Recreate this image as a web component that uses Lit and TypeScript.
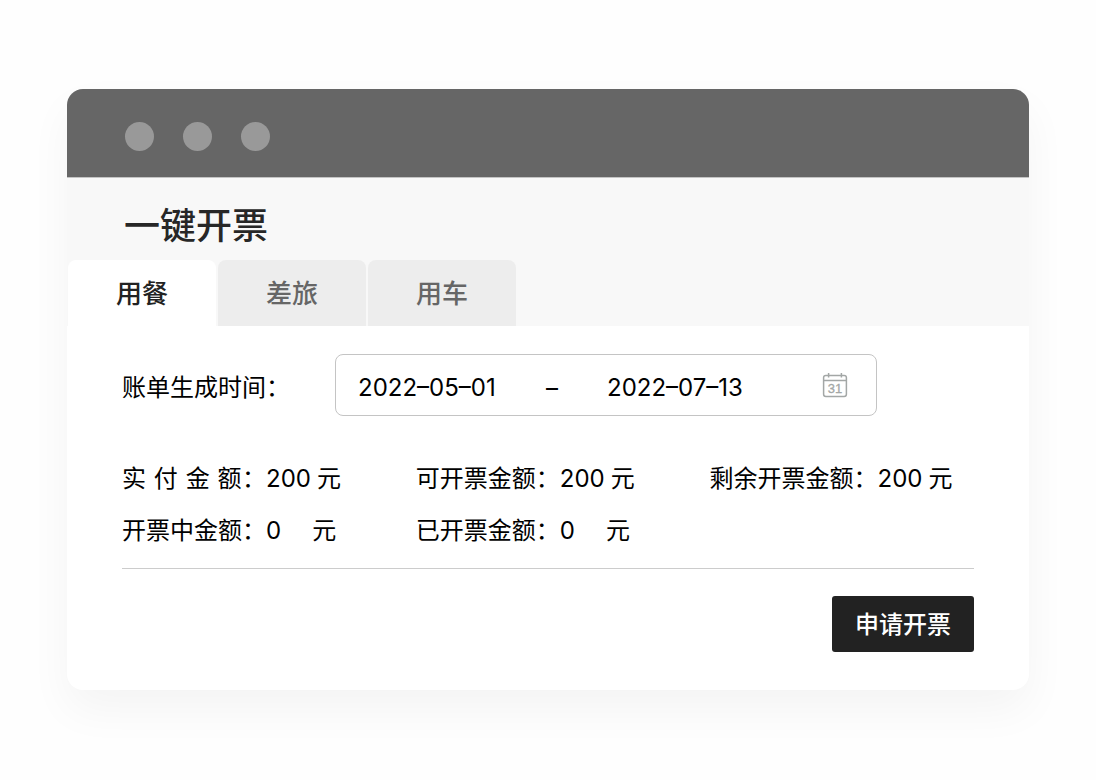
import { LitElement, html, css, svg } from "lit";
import { customElement, state } from "lit/decorators.js";
import { classMap } from "lit/directives/class-map.js";

interface Amount {
  label: string;
  value: string;
}

const TABS = ["用餐", "差旅", "用车"];

const AMOUNTS: Amount[] = [
  { label: "实 付 金 额：", value: "200" },
  { label: "可开票金额：", value: "200" },
  { label: "剩余开票金额：", value: "200" },
  { label: "开票中金额：", value: "0" },
  { label: "已开票金额：", value: "0" },
];

const calendarIcon = svg`
  <svg class="icon" viewBox="0 0 26 26" aria-hidden="true">
    <g fill="none" stroke="#a3a7a6" stroke-width="1.5">
      <rect x="1.6" y="3.4" width="22.8" height="21" rx="2.2" />
      <path d="M1.6 8.4H24.4M6.6 1V5.6M19.4 1V5.6" />
    </g>
    <text x="13" y="20.8" text-anchor="middle">31</text>
  </svg>`;

@customElement("app-root")
export class AppRoot extends LitElement {
  @state() private active = 0;

  static styles = css`
    :host {
      display: block;
      box-sizing: border-box;
      min-height: 100vh;
      padding: 89px 67px 90px;
      background: #fefefe;
      color: #000;
      font: 400 24px/36px Inter, "Noto Sans CJK SC", sans-serif;
    }
    .window {
      border-radius: 16px;
      background: #fff;
      box-shadow: 0 20px 44px rgba(0, 0, 0, 0.045);
      overflow: hidden;
    }
    .titlebar {
      display: flex;
      gap: 29px;
      padding: 33px 58px 26px;
      background: #666;
      border-bottom: 1px solid #c4c4c4;
    }
    .dot {
      width: 29px;
      height: 29px;
      border-radius: 50%;
      background: #999;
    }
    .head {
      padding: 24px 1px 0;
      background: #f8f8f8;
    }
    .title {
      margin: 0;
      padding: 0 56px 10px;
      color: #272727;
      font-size: 36px;
      line-height: 48px;
      font-weight: 500;
    }
    .tabs {
      display: flex;
      gap: 2px;
    }
    .tab {
      padding: 1px 48px 0;
      border: 0;
      border-radius: 8px 8px 0 0;
      background: #ededed;
      color: #666;
      font: inherit;
      font-size: 26px;
      line-height: 65px;
      font-weight: 500;
      cursor: pointer;
    }
    .tab.active {
      background: #fff;
      color: #222;
    }
    .body {
      padding: 28px 55px 38px;
    }
    .period {
      display: flex;
      align-items: center;
    }
    .period label {
      flex: none;
      padding-top: 5px;
    }
    .period .period-label {
      width: 213px;
    }
    .range {
      display: flex;
      flex: 0 1 542px;
      align-items: center;
      box-sizing: border-box;
      min-width: 0;
      height: 62px;
      padding: 0 28px 0 22px;
      border: 1px solid #c4c4c4;
      border-radius: 8px;
    }
    .date {
      min-width: 0;
      padding: 5px 0 0;
      border: 0;
      outline: 0;
      background: none;
      color: inherit;
      font: inherit;
    }
    .from {
      width: 188px;
    }
    .to {
      flex: 1;
      margin-left: 49px;
    }
    .icon {
      flex: none;
      width: 26px;
      height: 26px;
    }
    .icon text {
      fill: #a3a7a6;
      stroke: #a3a7a6;
      stroke-width: 0.3;
      font: 400 13px "Liberation Sans", sans-serif;
    }
    .amounts {
      display: grid;
      grid-template-columns: 10fr 10fr 9fr;
      row-gap: 16px;
      margin: 45px 0 19px;
    }
    .amount {
      display: flex;
      white-space: nowrap;
    }
    .amount-label {
      min-width: 144px;
      text-align-last: justify;
    }
    .unit {
      margin-left: 6px;
    }
    .unit.far {
      margin-left: 31px;
    }
    .actions {
      display: flex;
      justify-content: flex-end;
      padding-top: 27px;
      border-top: 1px solid #ccc;
    }
    .submit {
      padding: 1px 23px 0;
      border: 0;
      border-radius: 3px;
      background: #222;
      color: #fff;
      font: inherit;
      font-weight: 500;
      line-height: 55px;
      cursor: pointer;
    }
  `;

  render() {
    return html`
      <main class="window">
        <div class="titlebar">
          <span class="dot"></span><span class="dot"></span><span class="dot"></span>
        </div>
        <header class="head">
          <h1 class="title">一键开票</h1>
          <div class="tabs" role="tablist">
            ${TABS.map(
              (name, i) => html`<button
                class=${classMap({ tab: true, active: i === this.active })}
                role="tab"
                aria-selected=${i === this.active ? "true" : "false"}
                @click=${() => (this.active = i)}
              >${name}</button>`
            )}
          </div>
        </header>
        <section class="body">
          <div class="period">
            <label class="period-label" for="from">账单生成时间：</label>
            <div class="range">
              <input class="date from" id="from" type="text" value="2022–05–01" />
              <label for="to">–</label>
              <input class="date to" id="to" type="text" value="2022–07–13" />
              ${calendarIcon}
            </div>
          </div>
          <div class="amounts">
            ${AMOUNTS.map(
              (a) => html`<div class="amount">
                <span class="amount-label">${a.label}</span>
                <span>${a.value}</span>
                <span class=${classMap({ unit: true, far: a.value.length === 1 })}>元</span>
              </div>`
            )}
          </div>
          <div class="actions">
            <button class="submit" type="button">申请开票</button>
          </div>
        </section>
      </main>
    `;
  }
}
